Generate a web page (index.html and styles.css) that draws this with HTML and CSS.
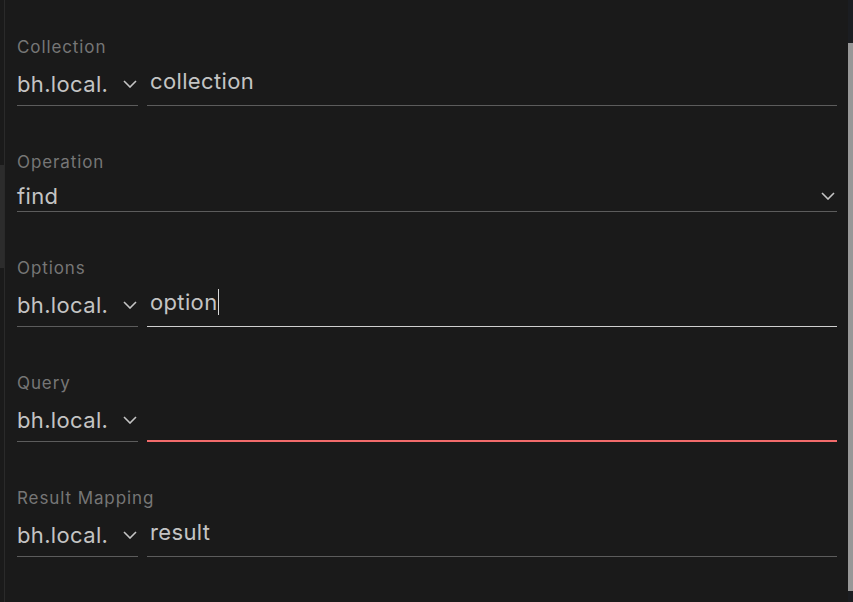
FILE: index.html
```html
<!DOCTYPE html>
<html lang="en">
<head>
<meta charset="utf-8">
<title>Operation form</title>
<link rel="stylesheet" href="styles.css">
</head>
<body>
<div class="app">
  <div class="gutter"><div class="gutter-thumb"></div></div>
  <main class="panel">
    <section class="field">
      <div class="label">Collection</div>
      <div class="combo">
        <div class="select narrow"><span class="value">bh.local.</span><svg class="chev" viewBox="0 0 14 8"><path d="M1 1l6 6 6-6"/></svg></div>
        <div class="input"><span class="value">collection</span></div>
      </div>
    </section>
    <section class="field">
      <div class="label">Operation</div>
      <div class="select full"><span class="value">find</span><svg class="chev" viewBox="0 0 14 8"><path d="M1 1l6 6 6-6"/></svg></div>
    </section>
    <section class="field">
      <div class="label">Options</div>
      <div class="combo">
        <div class="select narrow"><span class="value">bh.local.</span><svg class="chev" viewBox="0 0 14 8"><path d="M1 1l6 6 6-6"/></svg></div>
        <div class="input focused"><span class="value">option</span><span class="caret"></span></div>
      </div>
    </section>
    <section class="field">
      <div class="label">Query</div>
      <div class="combo">
        <div class="select narrow"><span class="value">bh.local.</span><svg class="chev" viewBox="0 0 14 8"><path d="M1 1l6 6 6-6"/></svg></div>
        <div class="input error"><span class="value"></span></div>
      </div>
    </section>
    <section class="field">
      <div class="label">Result Mapping</div>
      <div class="combo">
        <div class="select narrow"><span class="value">bh.local.</span><svg class="chev" viewBox="0 0 14 8"><path d="M1 1l6 6 6-6"/></svg></div>
        <div class="input"><span class="value">result</span></div>
      </div>
    </section>
  </main>
  <div class="scrollbar"><div class="scroll-thumb"></div></div>
</div>
</body>
</html>
```
FILE: styles.css
```css
* { box-sizing: border-box; }
html, body {
  margin: 0;
  padding: 0;
  background: #1a1a1a;
  height: 100%;
  overflow: hidden;
}
body {
  font-family: Inter, "Open Sans", sans-serif;
  color: #c4c4c4;
}
.app {
  display: flex;
  height: 602px;
}
.gutter {
  width: 4px;
  padding-top: 165px;
}
.gutter-thumb {
  height: 103px;
  background: #2c2c2c;
}
.panel {
  flex: 1;
  border-left: 1px solid #2a2a2a;
  padding: 37px 11px 0 12px;
}
.scrollbar {
  width: 5px;
  background: #1b1d21;
  padding-top: 43px;
  display: flex;
  flex-direction: column;
}
.scroll-thumb {
  height: 548px;
  background: #979797;
}
.field {
  margin-bottom: 46px;
}
.label {
  font-size: 17px;
  line-height: 20px;
  letter-spacing: 0.9px;
  color: #767676;
}
.combo {
  display: flex;
  gap: 9px;
  height: 49px;
}
.value {
  font-size: 22px;
  line-height: 26px;
  letter-spacing: 0.35px;
  white-space: nowrap;
}
.select {
  display: flex;
  justify-content: space-between;
  border-bottom: 1px solid #5c5c5c;
}
.select.narrow {
  width: 121px;
  flex: none;
  padding-top: 14px;
  padding-right: 1px;
  overflow: hidden;
}
.select.full {
  height: 40px;
  padding-top: 11px;
  padding-right: 2px;
}
.chev {
  width: 14px;
  height: 8px;
  flex: none;
  margin-top: 9px;
  fill: none;
  stroke: #c4c4c4;
  stroke-width: 1.6;
}
.input {
  flex: 1;
  display: flex;
  align-items: flex-start;
  padding-top: 11px;
  padding-left: 3px;
  border-bottom: 1px solid #5c5c5c;
}
.input.focused {
  border-bottom-color: #cfcfcf;
}
.input.error {
  border-bottom: 2px solid #f26b6b;
}
.caret {
  width: 1px;
  height: 26px;
  background: #d8d8d8;
  margin-left: 1px;
}
```
